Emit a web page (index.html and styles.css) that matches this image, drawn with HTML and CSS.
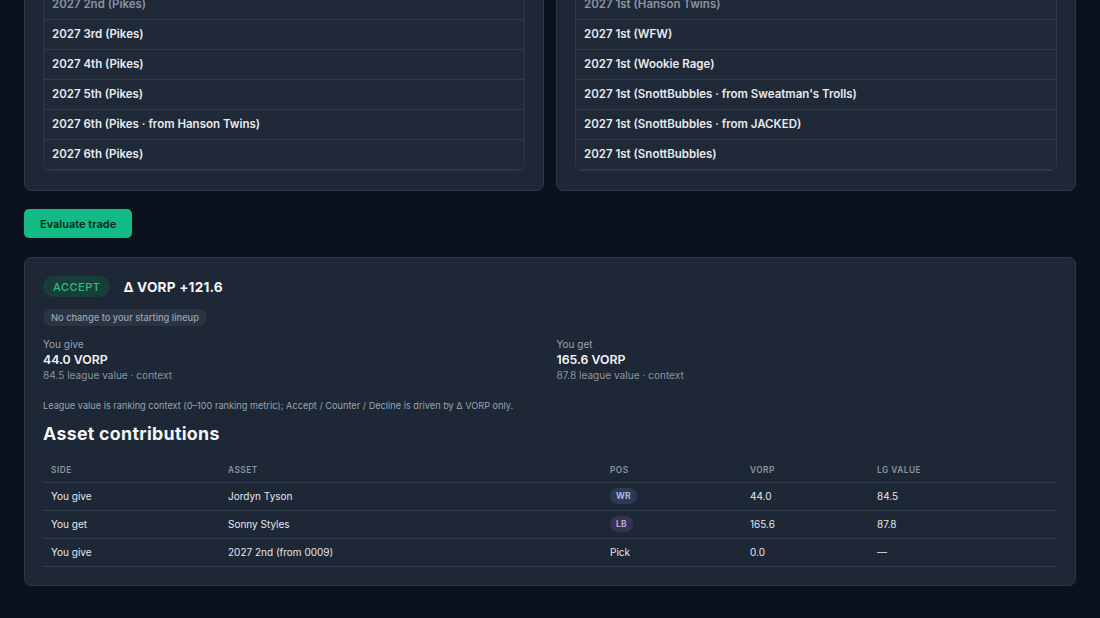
FILE: index.html
```html
<!DOCTYPE html>
<html lang="en">
<head>
<meta charset="utf-8">
<title>Trade evaluator</title>
<link rel="stylesheet" href="styles.css">
</head>
<body>
<main class="page">
  <section class="sides">
    <div class="panel">
      <div class="list">
        <div class="row faded">2027 2nd (Pikes)</div>
        <div class="row">2027 3rd (Pikes)</div>
        <div class="row">2027 4th (Pikes)</div>
        <div class="row">2027 5th (Pikes)</div>
        <div class="row">2027 6th (Pikes · from Hanson Twins)</div>
        <div class="row">2027 6th (Pikes)</div>
        <div class="row">2028 1st (Pikes)</div>
      </div>
    </div>
    <div class="panel">
      <div class="list">
        <div class="row faded">2027 1st (Hanson Twins)</div>
        <div class="row">2027 1st (WFW)</div>
        <div class="row">2027 1st (Wookie Rage)</div>
        <div class="row">2027 1st (SnottBubbles · from Sweatman's Trolls)</div>
        <div class="row">2027 1st (SnottBubbles · from JACKED)</div>
        <div class="row">2027 1st (SnottBubbles)</div>
        <div class="row">2027 2nd (SnottBubbles)</div>
      </div>
    </div>
  </section>

  <div class="actions">
    <button class="btn-primary" type="button">Evaluate trade</button>
  </div>

  <section class="panel result">
    <div class="verdict">
      <span class="pill-accept">ACCEPT</span>
      <span class="delta">Δ VORP +121.6</span>
    </div>
    <div class="lineup"><span class="pill-muted">No change to your starting lineup</span></div>
    <div class="totals">
      <div class="total">
        <div class="t-label">You give</div>
        <div class="t-value">44.0 VORP</div>
        <div class="t-sub">84.5 league value · context</div>
      </div>
      <div class="total">
        <div class="t-label">You get</div>
        <div class="t-value">165.6 VORP</div>
        <div class="t-sub">87.8 league value · context</div>
      </div>
    </div>
    <p class="note">League value is ranking context (0–100 ranking metric); Accept / Counter / Decline is driven by Δ VORP only.</p>
    <h2 class="heading">Asset contributions</h2>
    <table class="assets">
      <thead>
        <tr>
          <th class="c-side">Side</th>
          <th class="c-asset">Asset</th>
          <th class="c-pos">Pos</th>
          <th class="c-vorp">VORP</th>
          <th class="c-lg">LG Value</th>
        </tr>
      </thead>
      <tbody>
        <tr>
          <td>You give</td>
          <td>Jordyn Tyson</td>
          <td><span class="badge wr">WR</span></td>
          <td>44.0</td>
          <td>84.5</td>
        </tr>
        <tr>
          <td>You get</td>
          <td>Sonny Styles</td>
          <td><span class="badge lb">LB</span></td>
          <td>165.6</td>
          <td>87.8</td>
        </tr>
        <tr>
          <td>You give</td>
          <td>2027 2nd (from 0009)</td>
          <td>Pick</td>
          <td>0.0</td>
          <td>—</td>
        </tr>
      </tbody>
    </table>
  </section>
  <footer class="foot"></footer>
</main>
</body>
</html>
```

FILE: styles.css
```css
* { box-sizing: border-box; }

html, body {
  margin: 0;
  padding: 0;
  background: #0b111d;
  color: #e5e7eb;
  font-family: Inter, "Noto Sans", "Liberation Sans", sans-serif;
  overflow: hidden;
}

.page {
  padding: 0 24px;
  height: 618px;
}

.sides {
  display: grid;
  grid-template-columns: 1fr 1fr;
  gap: 12px;
  margin-top: -31px;
}

.panel {
  background: #1d2735;
  border: 1px solid #2b3645;
  border-radius: 7px;
  padding: 19px 18px;
}

.list {
  height: 182px;
  overflow: hidden;
  border: 1px solid #2b3645;
  border-radius: 6px;
  background: #1f2937;
}

.row {
  height: 30px;
  line-height: 29px;
  padding-left: 8px;
  border-bottom: 1px solid #2e3949;
  font-size: 11.5px;
  font-weight: 600;
  color: #e8ebef;
  white-space: nowrap;
}

.row.faded { color: #8b94a1; }

.actions {
  margin-top: 18px;
  margin-bottom: 19px;
  display: flex;
}

.btn-primary {
  height: 29px;
  padding: 0 16px;
  border: 0;
  border-radius: 5px;
  background: #12bb83;
  color: #06281c;
  font-family: Inter, "Noto Sans", sans-serif;
  font-size: 11px;
  font-weight: 600;
}

.result { padding: 18px 18px 18px; }

.verdict {
  display: flex;
  align-items: center;
  gap: 13px;
}

.pill-accept {
  display: inline-flex;
  align-items: center;
  height: 21px;
  padding: 0 10px;
  border-radius: 11px;
  background: #173e39;
  color: #2dbd88;
  font-size: 11px;
  font-weight: 500;
  letter-spacing: 0.5px;
}

.delta {
  font-size: 13.6px;
  font-weight: 700;
  color: #f3f4f6;
  letter-spacing: 0.2px;
}

.lineup { margin-top: 8px; }

.pill-muted {
  display: inline-flex;
  align-items: center;
  height: 17px;
  padding: 0 8px;
  border-radius: 9px;
  background: #2a3442;
  color: #9aa3ae;
  font-size: 9.3px;
  font-weight: 500;
}

.totals {
  display: grid;
  grid-template-columns: 1fr 1fr;
  gap: 13px;
  margin-top: 12px;
}

.t-label {
  font-size: 10px;
  color: #9aa3ae;
  line-height: 13px;
}

.t-value {
  font-size: 12.3px;
  font-weight: 600;
  color: #f3f4f6;
  line-height: 18px;
}

.t-sub {
  font-size: 10.1px;
  color: #8b94a1;
  line-height: 13px;
}

.note {
  margin: 17px 0 0;
  font-size: 9.2px;
  color: #9aa3ae;
  line-height: 13px;
}

.heading {
  margin: 9px 0 0;
  font-size: 17.8px;
  font-weight: 700;
  color: #f3f4f6;
  letter-spacing: 0.3px;
  line-height: 26px;
}

.assets {
  width: 100%;
  border-collapse: collapse;
  margin-top: 11px;
  table-layout: fixed;
}

.assets th {
  text-align: left;
  font-size: 8.3px;
  font-weight: 600;
  color: #8b94a1;
  text-transform: uppercase;
  letter-spacing: 0.5px;
  padding: 0 8px 0;
  height: 24px;
  border-bottom: 1px solid #2e3949;
}

.assets td {
  font-size: 10px;
  color: #e5e7eb;
  padding: 0 8px;
  height: 28px;
  border-bottom: 1px solid #2e3949;
}

.c-side { width: 177px; }
.c-asset { width: 382px; }
.c-pos { width: 140px; }
.c-vorp { width: 127px; }

.badge {
  display: inline-flex;
  align-items: center;
  height: 16px;
  padding: 0 6px;
  border-radius: 8px;
  font-size: 8.5px;
  font-weight: 700;
  letter-spacing: 0.3px;
}

.badge.wr { background: #2c3a55; color: #a9b8d8; }
.badge.lb { background: #363350; color: #b6aad8; }

.foot {
  margin-top: 30px;
  border-top: 1px solid #343e4c;
}
```
